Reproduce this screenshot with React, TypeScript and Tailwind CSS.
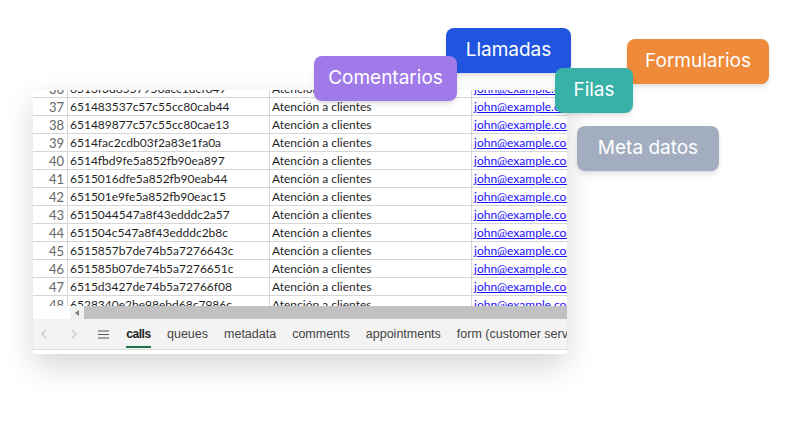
import React from "react";

const rows = [
  ["36", "6513f3d8557950acc1dcf849"],
  ["37", "651483537c57c55cc80cab44"],
  ["38", "651489877c57c55cc80cae13"],
  ["39", "6514fac2cdb03f2a83e1fa0a"],
  ["40", "6514fbd9fe5a852fb90ea897"],
  ["41", "6515016dfe5a852fb90eab44"],
  ["42", "651501e9fe5a852fb90eac15"],
  ["43", "6515044547a8f43edddc2a57"],
  ["44", "651504c547a8f43edddc2b8c"],
  ["45", "6515857b7de74b5a7276643c"],
  ["46", "651585b07de74b5a7276651c"],
  ["47", "6515d3427de74b5a72766f08"],
  ["48", "6528340e2be98ebd68c7986c"],
];

const tabs = ["queues", "metadata", "comments", "appointments", "form (customer service)"];

function Badge({ label, className }: { label: string; className: string }) {
  return (
    <div
      className={`absolute h-[45px] rounded-lg flex items-center justify-center text-white text-[19px] shadow-md font-['Inter',sans-serif] ${className}`}
    >
      {label}
    </div>
  );
}

export default function App() {
  return (
    <div className="relative w-[802px] h-[438px] bg-white overflow-hidden">
      {/* sheet */}
      <div className="ml-[33px] mt-[90px] w-[534px] h-[264px] bg-white overflow-hidden flex flex-col shadow-[0_12px_28px_rgba(0,0,0,0.16)]">
        <div className="h-[216px] overflow-hidden">
          <div className="-mt-[10px] font-['Lato',sans-serif] text-[12px] text-[#1f1f1f]">
            {rows.map(([n, id]) => (
              <div key={n} className="flex h-[18px] border-b border-[#d6d6d6]">
                <div className="w-[35px] shrink-0 border-r border-[#d6d6d6] text-right pr-[3px] text-[13px] text-[#666] leading-[18px]">
                  {n}
                </div>
                <div className="w-[202px] shrink-0 border-r border-[#d6d6d6] pl-[2px] leading-[18px] whitespace-nowrap overflow-hidden">
                  {id}
                </div>
                <div className="w-[202px] shrink-0 border-r border-[#d6d6d6] pl-[2px] leading-[18px] whitespace-nowrap overflow-hidden">
                  Atención a clientes
                </div>
                <div className="flex-1 pl-[2px] leading-[18px] whitespace-nowrap overflow-hidden text-[#1a0dff] underline">
                  john@example.com
                </div>
              </div>
            ))}
          </div>
        </div>
        {/* horizontal scrollbar */}
        <div className="h-[13px] flex">
          <div className="w-[37px] bg-white" />
          <div className="w-[14px] bg-[#f1f1f1] flex items-center justify-center">
            <span className="block w-0 h-0 border-y-[3px] border-y-transparent border-r-[4px] border-r-[#7a7a7a]" />
          </div>
          <div className="flex-1 bg-[#c1c1c1]" />
        </div>
        {/* tab bar */}
        <div className="h-[31px] bg-[#f3f3f3] border-b border-[#dcdcdc] flex items-center font-['Liberation_Sans',sans-serif] text-[12.5px] text-[#444] whitespace-nowrap">
          <svg className="ml-[8px] shrink-0 w-[6px] h-[10px]" viewBox="0 0 6 10" fill="none" stroke="#c4c4c4" strokeWidth="1.1">
            <path d="M5 1 1 5l4 4" />
          </svg>
          <svg className="ml-[24px] shrink-0 w-[6px] h-[10px]" viewBox="0 0 6 10" fill="none" stroke="#c4c4c4" strokeWidth="1.1">
            <path d="M1 1l4 4-4 4" />
          </svg>
          <svg className="ml-[21px] shrink-0 w-[11px] h-[9px]" viewBox="0 0 11 9" fill="none" stroke="#555" strokeWidth="1.2">
            <path d="M0 1h11M0 4.5h11M0 8h11" />
          </svg>
          <div className="ml-[17px] w-[25px] shrink-0 relative h-full flex items-center justify-center font-bold text-[12px] tracking-[-0.4px] text-[#222]">
            calls
            <span className="absolute left-0 right-0 bottom-[1px] h-[2px] bg-[#1e7145]" />
          </div>
          {tabs.map((t) => (
            <span key={t} className="ml-[16px] shrink-0">
              {t}
            </span>
          ))}
        </div>
        <div className="flex-1 bg-white" />
      </div>

      {/* floating labels */}
      <Badge label="Llamadas" className="left-[446px] top-[28px] w-[125px] bg-[#2155e0]" />
      <Badge label="Comentarios" className="left-[314px] top-[56px] w-[143px] bg-[#a07ae8]" />
      <Badge label="Formularios" className="left-[627px] top-[39px] w-[142px] bg-[#ee8a39]" />
      <Badge label="Filas" className="left-[555px] top-[68px] w-[78px] bg-[#38b2a9]" />
      <Badge label="Meta datos" className="left-[577px] top-[126px] w-[142px] bg-[#a2aec0]" />
    </div>
  );
}
